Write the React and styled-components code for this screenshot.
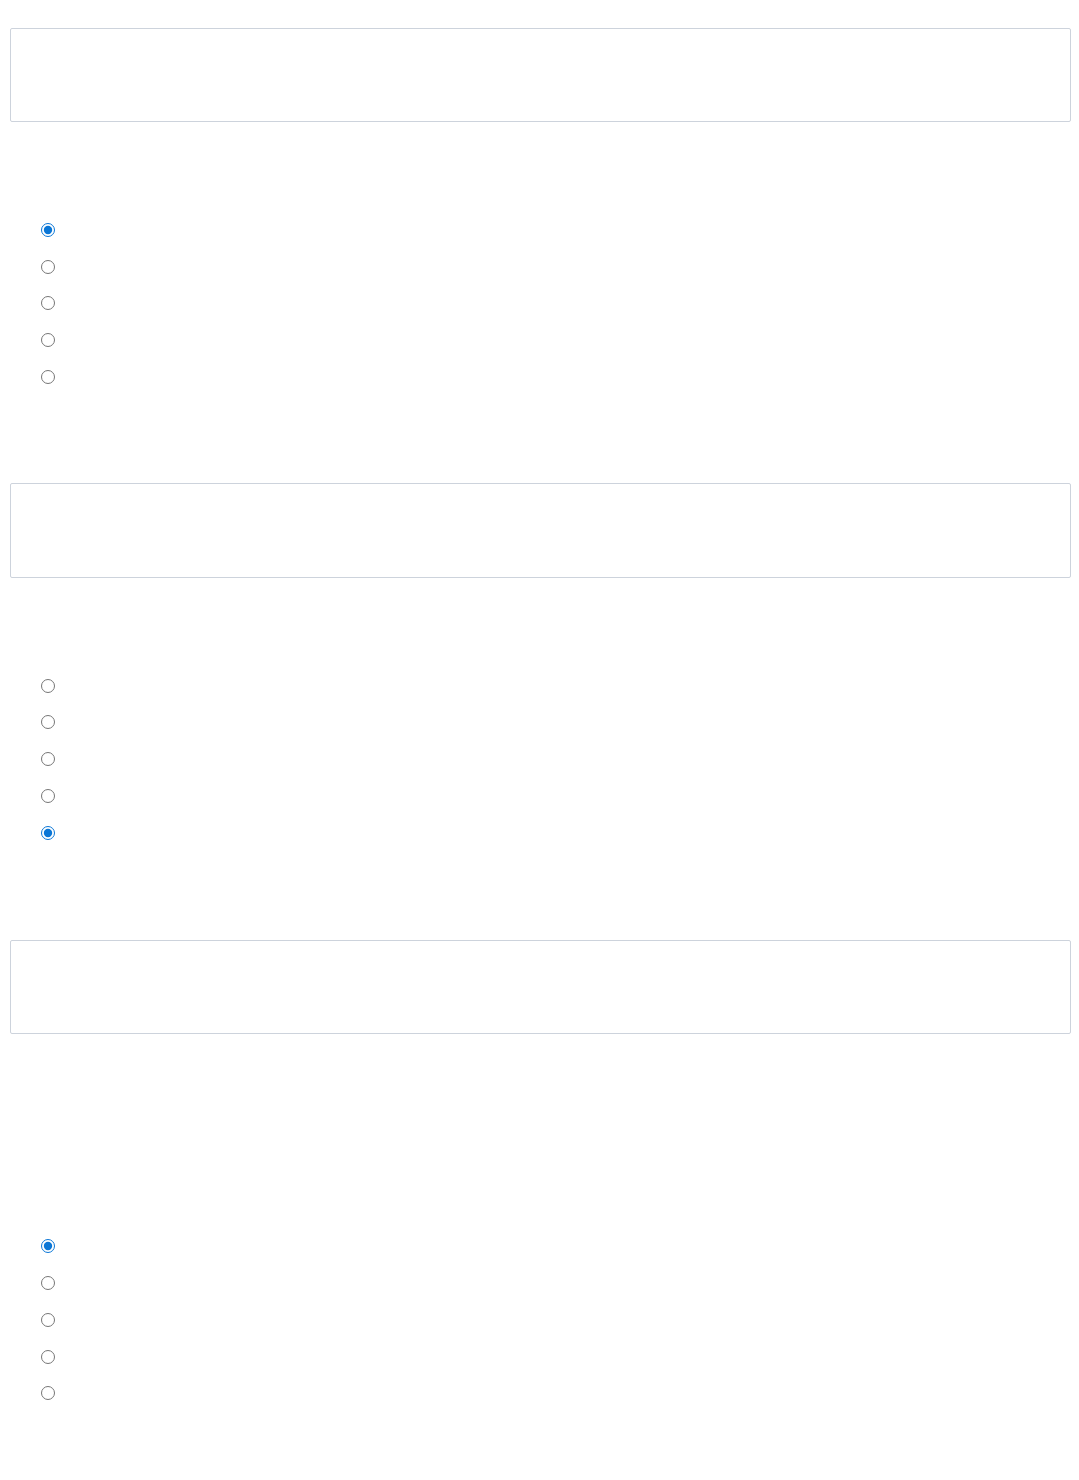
import React from 'react';
import styled, { createGlobalStyle } from 'styled-components';

const GlobalStyle = createGlobalStyle`
  html, body {
    margin: 0;
    padding: 0;
    background: #ffffff;
    font-family: "Liberation Sans", Arial, sans-serif;
  }
`;

const StyledPage = styled.main`
  display: flex;
  flex-direction: column;
  gap: 87.5px;
  padding: 28px 8px 0 10px;
`;

const StyledAnswerBox = styled.div`
  height: ${({ $height }) => $height}px;
  box-sizing: border-box;
  border: 1px solid #cdd3dc;
  border-radius: 2px;
  background: #ffffff;
`;

const StyledChoiceList = styled.fieldset`
  display: flex;
  flex-direction: column;
  margin: ${({ $top }) => $top}px 0 ${({ $bottom }) => $bottom}px;
  padding: 0 0 0 30.5px;
  border: none;
  min-inline-size: 0;
`;

const StyledChoice = styled.label`
  display: flex;
  align-items: center;
  height: 36.75px;

  input {
    width: 14px;
    height: 14px;
    margin: 0;
    accent-color: #0a76d6;
  }
`;

const groups = [
  { name: 'q1', box: 94, checked: 0, top: 2, bottom: 0 },
  { name: 'q2', box: 95, checked: 4, top: 2, bottom: 1.5 },
  { name: 'q3', box: 94, checked: 0, top: 106.5, bottom: 0 },
];

const ChoiceGroup = ({ name, checked, top, bottom }) => (
  <StyledChoiceList $top={top} $bottom={bottom}>
    {[0, 1, 2, 3, 4].map(i => (
      <StyledChoice key={i}>
        <input type="radio" name={name} defaultChecked={i === checked} />
      </StyledChoice>
    ))}
  </StyledChoiceList>
);

const App = () => (
  <>
    <GlobalStyle />
    <StyledPage>
      {groups.map(({ box, ...group }) => (
        <React.Fragment key={group.name}>
          <StyledAnswerBox $height={box} />
          <ChoiceGroup {...group} />
        </React.Fragment>
      ))}
    </StyledPage>
  </>
);

export default App;
